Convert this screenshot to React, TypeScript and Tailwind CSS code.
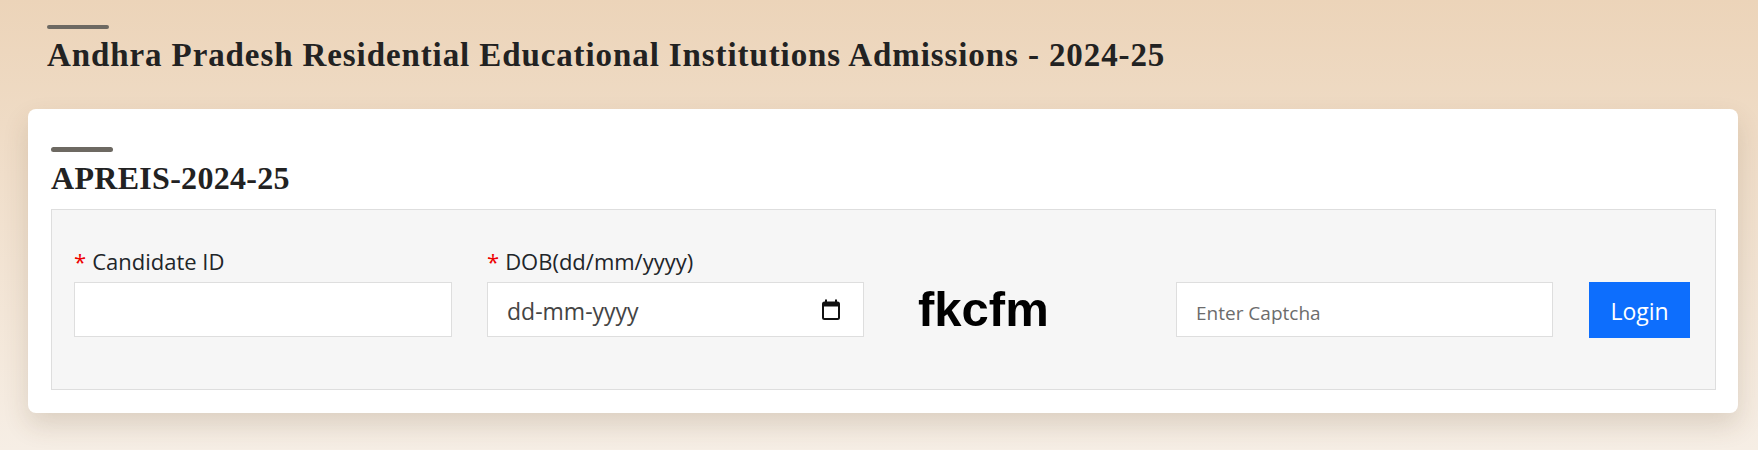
import React from 'react';

const serif = "font-['Liberation_Serif','Times_New_Roman',serif]";
const sans = "font-['Open_Sans','Noto_Sans',sans-serif]";

function CalendarIcon() {
  return (
    <svg width="18" height="21" viewBox="0 0 18 21" fill="none">
      <rect x="1" y="3.5" width="16" height="16.5" rx="1.5" stroke="#111" strokeWidth="2" />
      <rect x="1" y="3.5" width="16" height="4" fill="#111" />
      <rect x="3" y="0.5" width="2" height="4" fill="#111" />
      <rect x="13" y="0.5" width="2" height="4" fill="#111" />
    </svg>
  );
}

function Label({ text }: { text: string }) {
  return (
    <label className={`${sans} block text-[22px] leading-[30px] text-[#212529] mb-[6px]`}>
      <span className="text-[#e00] mr-[6px]">*</span>
      {text}
    </label>
  );
}

export default function App() {
  return (
    <div className="min-h-[450px] w-full bg-gradient-to-b from-[#ecd4b9] to-[#f6eee5] pl-[28px] pr-[20px] pt-[25px] pb-[36px]">
      <div className="pl-[19px]">
        <div className="h-[4px] w-[62px] rounded-full bg-[#6d6962]" />
        <h1 className={`${serif} mt-[7px] text-[33px] leading-[38px] font-bold tracking-[0.9px] text-[#222]`}>
          Andhra Pradesh Residential Educational Institutions Admissions - 2024-25
        </h1>
      </div>

      <div className="mt-[35px] rounded-[8px] bg-white pl-[23px] pr-[22px] pt-[38px] pb-[23px] shadow-[0_12px_26px_rgba(90,60,30,0.16)]">
        <div className="h-[5px] w-[62px] rounded-full bg-[#6d6962]" />
        <h2 className={`${serif} mt-[7px] text-[32px] leading-[38px] font-bold tracking-[0.3px] text-[#222]`}>
          APREIS-2024-25
        </h2>

        <div className="mt-[12px] border border-[#dedede] bg-[#f6f6f6] pl-[22px] pt-[36px] pb-[52px]">
          <div className="flex items-end">
            <div className="w-[378px]">
              <Label text="Candidate ID" />
              <input
                type="text"
                className={`${sans} h-[55px] w-full border border-[#dedede] bg-white px-[19px] text-[22px] outline-none`}
              />
            </div>

            <div className="ml-[35px] w-[377px]">
              <Label text="DOB(dd/mm/yyyy)" />
              <div className="flex h-[55px] w-full items-center justify-between border border-[#dedede] bg-white pl-[19px] pr-[23px]">
                <span className={`${sans} pt-[3px] text-[23px] text-[#444]`}>dd-mm-yyyy</span>
                <CalendarIcon />
              </div>
            </div>

            <div className="ml-[54px] flex h-[55px] w-[258px] items-center">
              <span className="font-['Liberation_Sans',Arial,sans-serif] text-[49px] leading-[49px] font-bold tracking-[0px] text-black select-none">
                fkcfm
              </span>
            </div>

            <input
              type="text"
              placeholder="Enter Captcha"
              className={`${sans} h-[55px] w-[377px] border border-[#dedede] bg-white px-[19px] pt-[6px] text-[19px] text-[#333] placeholder:text-[#6c6c6c] outline-none`}
            />

            <button
              className={`${sans} ml-[36px] mb-[-1px] h-[56px] w-[101px] bg-[#0d6efd] pt-[2px] text-[23px] text-white`}
            >
              Login
            </button>
          </div>
        </div>
      </div>
    </div>
  );
}
